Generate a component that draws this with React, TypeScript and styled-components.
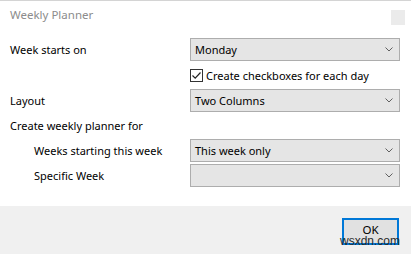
import styled, { createGlobalStyle } from 'styled-components';

const GlobalStyle = createGlobalStyle`
  html, body {
    margin: 0;
    padding: 0;
    background: #ffffff;
  }
  body {
    font-family: 'Segoe UI', 'Noto Sans', 'Liberation Sans', sans-serif;
    font-size: 11px;
    color: #000000;
  }
`;

const Chevron = () => (
  <svg width="8" height="5" viewBox="0 0 8 5" fill="none">
    <path d="M0.5 0.5 L4 4 L7.5 0.5" stroke="#606060" strokeWidth="1" />
  </svg>
);

const CheckMark = () => (
  <svg width="11" height="11" viewBox="0 0 11 11" fill="none">
    <path d="M1.5 5.5 L4.2 8.2 L9.5 2.5" stroke="#222" strokeWidth="1.2" />
  </svg>
);

interface ISelectProps {
  value?: string;
}

const Select = ({ value }: ISelectProps) => (
  <SelectBox>
    <SelectValue>{value}</SelectValue>
    <Chevron />
  </SelectBox>
);

const App = () => {
  return (
    <>
      <GlobalStyle />
      <Window>
        <TitleBar>
          <Title>Weekly Planner</Title>
          <CloseButton />
        </TitleBar>

        <Body>
          <FieldRow>
            <Label>Week starts on</Label>
            <Select value="Monday" />
          </FieldRow>

          <CheckRow>
            <span />
            <CheckLabel>
              <CheckBox>
                <CheckMark />
              </CheckBox>
              Create checkboxes for each day
            </CheckLabel>
          </CheckRow>

          <FieldRow>
            <Label>Layout</Label>
            <Select value="Two Columns" />
          </FieldRow>

          <SectionLabel>Create weekly planner for</SectionLabel>

          <FieldRow>
            <Label $indent>Weeks starting this week</Label>
            <Select value="This week only" />
          </FieldRow>
          <FieldRow $gap>
            <Label $indent>Specific Week</Label>
            <Select />
          </FieldRow>
        </Body>

        <Footer>
          <OkButton>OK</OkButton>
          <Watermark>wsxdn.com</Watermark>
        </Footer>
      </Window>
    </>
  );
};

export default App;

const Window = styled.div`
  display: flex;
  flex-direction: column;
  width: 411px;
  height: 254px;
  box-sizing: border-box;
  border-top: 1px solid #d4d4d4;
  background: #ffffff;
  overflow: hidden;
`;

const TitleBar = styled.div`
  display: flex;
  align-items: flex-start;
  justify-content: space-between;
  height: 29px;
  padding: 0 6px 0 10px;
`;

const Title = styled.div`
  margin-top: 6px;
  color: #8c8c8c;
  font-size: 11.5px;
`;

const CloseButton = styled.div`
  width: 14px;
  height: 15px;
  margin-top: 9px;
  background: #ebebeb;
`;

const Body = styled.div`
  display: flex;
  flex-direction: column;
  flex: 1;
  padding: 8px 11px 0 10px;
`;

const FieldRow = styled.div<{ $gap?: boolean }>`
  display: grid;
  grid-template-columns: 180px 210px;
  align-items: center;
  height: 23px;
  margin-top: ${props => (props.$gap ? '2px' : '0')};
`;

const Label = styled.div<{ $indent?: boolean }>`
  padding-left: ${props => (props.$indent ? '24px' : '0')};
  white-space: nowrap;
`;

const SelectBox = styled.div`
  display: flex;
  align-items: center;
  justify-content: space-between;
  height: 23px;
  box-sizing: border-box;
  padding: 0 6px 0 4px;
  border: 1px solid #adadad;
  background: #e5e5e5;
`;

const SelectValue = styled.span`
  white-space: nowrap;
`;

const CheckRow = styled.div`
  display: grid;
  grid-template-columns: 180px 210px;
  align-items: center;
  height: 28px;
`;

const CheckLabel = styled.label`
  display: flex;
  align-items: center;
  gap: 3px;
  white-space: nowrap;
`;

const CheckBox = styled.span`
  display: flex;
  align-items: center;
  justify-content: center;
  width: 13px;
  height: 13px;
  box-sizing: border-box;
  border: 1px solid #333333;
  background: #ffffff;
`;

const SectionLabel = styled.div`
  display: flex;
  align-items: center;
  height: 27px;
`;

const Footer = styled.div`
  position: relative;
  display: flex;
  align-items: flex-start;
  justify-content: flex-end;
  height: 48px;
  padding: 12px 12px 0 0;
  box-sizing: border-box;
  background: #f0f0f0;
`;

const OkButton = styled.button`
  width: 57px;
  height: 27px;
  box-sizing: border-box;
  border: 2px solid #0078d7;
  background: #e1e1e1;
  font-family: inherit;
  font-size: 11.5px;
  color: #000000;
  padding: 0 0 4px;
`;

const Watermark = styled.span`
  position: absolute;
  right: 11px;
  bottom: 6px;
  font-family: 'Liberation Sans', Arial, sans-serif;
  font-size: 12px;
  color: #2a2a2a;
`;
